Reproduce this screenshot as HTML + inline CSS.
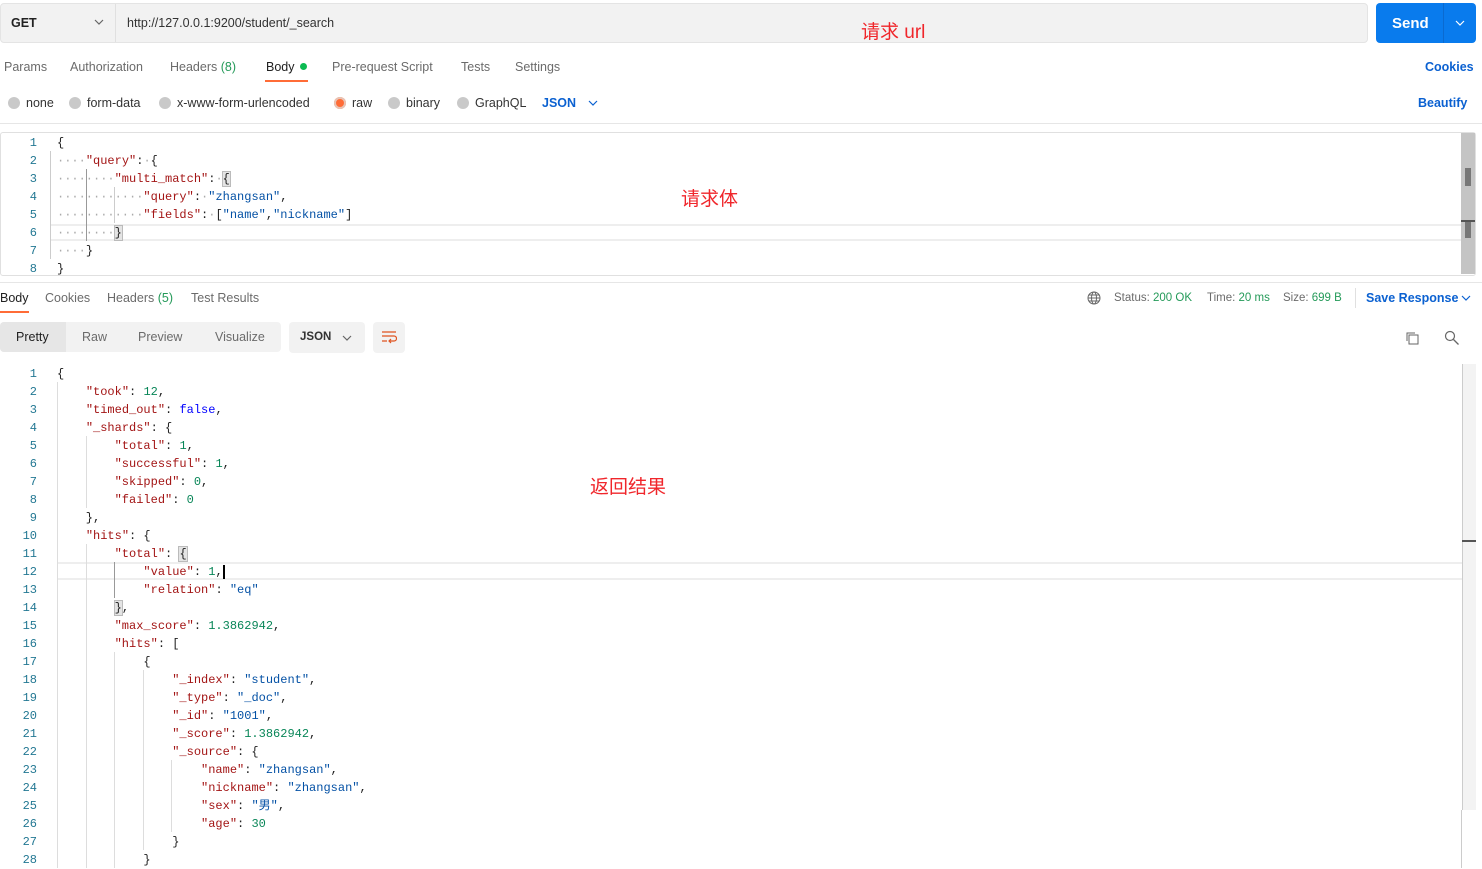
<!DOCTYPE html>
<html><head><meta charset="utf-8"><style>
*{margin:0;padding:0;box-sizing:border-box}
body{width:1482px;height:868px;overflow:hidden;background:#fff;font-family:"Liberation Sans",Arial,sans-serif;color:#212121;position:relative}
.a{position:absolute;white-space:nowrap}
.t{font-size:12.5px;color:#6b6b6b}
.m{font-family:"Liberation Mono","Noto Sans CJK SC",monospace;font-size:12px;white-space:pre;line-height:18px}
.ln{color:#237893;text-align:right;width:37px;left:0}
.k{color:#a31515}.s{color:#0451a5}.n{color:#098658}.b{color:#0000ff}.p{color:#212121}
.dot{display:inline-block;width:12px;height:12px;border-radius:50%;background:#c9c9c9;vertical-align:-2px;margin-right:6px}
.red{color:#f0262b;font-family:"Liberation Sans","Noto Sans CJK SC",sans-serif;font-size:19px}
.blue{color:#0b61d1}
.g{color:#249a59}
.w{color:#aaa}
</style></head><body>
<div class="a" style="left:0;top:3px;width:1368px;height:40px;background:#f2f2f2;border:1px solid #e4e4e4;border-radius:4px"></div>
<div class="a" style="left:115px;top:4px;width:1px;height:38px;background:#e0e0e0"></div>
<div class="a" style="left:11px;top:16px;font-size:12.5px;font-weight:bold;color:#222">GET</div>
<svg class="a" style="left:94px;top:18px" width="10" height="8"><path d="M1 2l4 4 4-4" stroke="#666" fill="none" stroke-width="1.2"/></svg>
<div class="a" style="left:127px;top:16px;font-size:12.5px;color:#333">http://127.0.0.1:9200/student/_search</div>
<div class="a red" style="left:861px;top:17px">请求 url</div>
<div class="a" style="left:1376px;top:3px;width:100px;height:40px;background:#097bed;border-radius:4px"></div>
<div class="a" style="left:1443px;top:3px;width:1px;height:40px;background:#0a6ad0"></div>
<div class="a" style="left:1392px;top:15px;font-size:15px;font-weight:bold;color:#fff">Send</div>
<svg class="a" style="left:1455px;top:19px" width="10" height="8"><path d="M1 2l4 4 4-4" stroke="#fff" fill="none" stroke-width="1.2"/></svg>
<div class="a t" style="left:4px;top:60px">Params</div>
<div class="a t" style="left:70px;top:60px">Authorization</div>
<div class="a t" style="left:170px;top:60px">Headers <span class="g">(8)</span></div>
<div class="a t" style="left:266px;top:60px;color:#212121">Body <span style="display:inline-block;width:7px;height:7px;border-radius:50%;background:#0cbb52;vertical-align:1px;margin-left:2px"></span></div>
<div class="a" style="left:265px;top:80px;width:43px;height:2px;background:#ff6c37"></div>
<div class="a t" style="left:332px;top:60px">Pre-request Script</div>
<div class="a t" style="left:461px;top:60px">Tests</div>
<div class="a t" style="left:515px;top:60px">Settings</div>
<div class="a blue" style="left:1425px;top:60px;font-size:12.5px;font-weight:bold">Cookies</div>
<div class="a t" style="left:8px;top:96px;color:#333"><span class="dot"></span>none</div>
<div class="a t" style="left:69px;top:96px;color:#333"><span class="dot"></span>form-data</div>
<div class="a t" style="left:159px;top:96px;color:#333"><span class="dot"></span>x-www-form-urlencoded</div>
<div class="a t" style="left:334px;top:96px;color:#333"><span class="dot" style="background:#ff6c37;box-shadow:0 0 0 2px #e7c4b6 inset"></span>raw</div>
<div class="a t" style="left:388px;top:96px;color:#333"><span class="dot"></span>binary</div>
<div class="a t" style="left:457px;top:96px;color:#333"><span class="dot"></span>GraphQL</div>
<div class="a blue" style="left:542px;top:96px;font-size:12.5px;font-weight:bold">JSON</div>
<svg class="a" style="left:588px;top:99px" width="10" height="8"><path d="M1 2l4 4 4-4" stroke="#0b61d1" fill="none" stroke-width="1.2"/></svg>
<div class="a blue" style="left:1418px;top:96px;font-size:12.5px;font-weight:bold">Beautify</div>
<div class="a" style="left:0;top:123px;width:1482px;height:1px;background:#e6e6e6"></div>
<div class="a" style="left:0;top:132px;width:1476px;height:144px;border:1px solid #e0e0e0;border-radius:3px"></div>
<div class="a" style="left:50px;top:224px;width:1411px;height:17px;border-top:2px solid #eee;border-bottom:2px solid #eee"></div>
<div class="a" style="left:1461px;top:133px;width:14px;height:141px;background:#c4c4c4"></div>
<div class="a" style="left:1465px;top:168px;width:6px;height:18px;background:#777"></div>
<div class="a" style="left:1461px;top:220px;width:14px;height:2px;background:#555"></div>
<div class="a" style="left:1465px;top:222px;width:6px;height:16px;background:#777"></div>
<div class="a" style="left:50px;top:151px;width:1px;height:108px;background:#ccc"></div>
<div class="a" style="left:86px;top:169px;width:1px;height:72px;background:#999"></div>
<div class="a" style="left:114px;top:187px;width:1px;height:36px;background:#ccc"></div>
<div class="a m ln" style="top:134px">1
2
3
4
5
6
7
8</div>
<div class="a m" style="left:57px;top:134px"><span class="p">{</span>
<span class="w">····</span><span class="k">"query"</span>:<span class="w">·</span>{
<span class="w">········</span><span class="k">"multi_match"</span>:<span class="w">·</span><span style="background:#e4e4e4;outline:1px solid #bbb">{</span>
<span class="w">············</span><span class="k">"query"</span>:<span class="w">·</span><span class="s">"zhangsan"</span>,
<span class="w">············</span><span class="k">"fields"</span>:<span class="w">·</span>[<span class="s">"name"</span>,<span class="s">"nickname"</span>]
<span class="w">········</span><span style="background:#e4e4e4;outline:1px solid #bbb">}</span>
<span class="w">····</span>}
}</div>
<div class="a red" style="left:681px;top:184px">请求体</div>
<div class="a" style="left:0;top:282px;width:1482px;height:1px;background:#e6e6e6"></div>
<div class="a t" style="left:0;top:291px;color:#212121">Body</div>
<div class="a" style="left:0;top:311px;width:29px;height:2px;background:#ff6c37"></div>
<div class="a t" style="left:45px;top:291px">Cookies</div>
<div class="a t" style="left:107px;top:291px">Headers <span class="g">(5)</span></div>
<div class="a t" style="left:191px;top:291px">Test Results</div>
<svg class="a" style="left:1087px;top:291px" width="14" height="14"><circle cx="7" cy="7" r="6" stroke="#666" fill="none"/><ellipse cx="7" cy="7" rx="2.5" ry="6" stroke="#666" fill="none"/><path d="M1 7h12M2 4h10M2 10h10" stroke="#666"/></svg>
<div class="a" style="left:1114px;top:292px;font-size:11.5px;color:#6b6b6b">Status: <span class="g">200 OK</span></div>
<div class="a" style="left:1207px;top:292px;font-size:11.5px;color:#6b6b6b">Time: <span class="g">20 ms</span></div>
<div class="a" style="left:1283px;top:292px;font-size:11.5px;color:#6b6b6b">Size: <span class="g">699 B</span></div>
<div class="a" style="left:1355px;top:288px;width:1px;height:20px;background:#e0e0e0"></div>
<div class="a blue" style="left:1366px;top:291px;font-size:12.5px;font-weight:bold">Save Response</div>
<svg class="a" style="left:1461px;top:294px" width="10" height="8"><path d="M1 2l4 4 4-4" stroke="#0b61d1" fill="none" stroke-width="1.2"/></svg>
<div class="a" style="left:0;top:322px;width:281px;height:30px;background:#f2f2f2;border-radius:4px"></div>
<div class="a" style="left:0;top:322px;width:66px;height:30px;background:#e6e6e6;border-radius:4px 0 0 4px"></div>
<div class="a" style="left:16px;top:330px;font-size:12.5px;color:#212121">Pretty</div>
<div class="a t" style="left:82px;top:330px">Raw</div>
<div class="a t" style="left:138px;top:330px">Preview</div>
<div class="a t" style="left:215px;top:330px">Visualize</div>
<div class="a" style="left:289px;top:322px;width:76px;height:31px;background:#f2f2f2;border-radius:4px"></div>
<div class="a" style="left:300px;top:331px;font-size:11.5px;font-weight:bold;color:#333">JSON</div>
<svg class="a" style="left:342px;top:334px" width="10" height="8"><path d="M1 2l4 4 4-4" stroke="#666" fill="none" stroke-width="1.2"/></svg>
<div class="a" style="left:373px;top:322px;width:32px;height:31px;background:#f2f2f2;border-radius:4px"></div>
<svg class="a" style="left:381px;top:330px" width="16" height="14"><path d="M1 2h14M1 6h12a2.5 2.5 0 0 1 0 5h-4M10 9l-2 2 2 2M1 11h5" stroke="#e0531f" fill="none" stroke-width="1.2"/></svg>
<svg class="a" style="left:1404px;top:330px" width="16" height="16"><rect x="5" y="5" width="9" height="9" stroke="#666" fill="none"/><path d="M3 11V3h8" stroke="#666" fill="none"/></svg>
<svg class="a" style="left:1444px;top:330px" width="16" height="16"><circle cx="6" cy="6" r="4.5" stroke="#666" fill="none" stroke-width="1.2"/><path d="M9.5 9.5l5 5" stroke="#666" stroke-width="1.3"/></svg>
<div class="a" style="left:57px;top:562px;width:1418px;height:18px;border-top:2px solid #eee;border-bottom:2px solid #eee;border-right:2px solid #eee"></div>
<div class="a" style="left:1462px;top:364px;width:14px;height:446px;background:#f3f3f3;border-left:1px solid #ccc"></div>
<div class="a" style="left:1462px;top:540px;width:14px;height:2px;background:#555"></div>
<div class="a" style="left:1461px;top:810px;width:1px;height:58px;background:#ccc"></div>
<div class="a" style="left:57px;top:382px;width:1px;height:486px;background:#ddd"></div>
<div class="a" style="left:86px;top:436px;width:1px;height:72px;background:#ddd"></div>
<div class="a" style="left:86px;top:544px;width:1px;height:324px;background:#ddd"></div>
<div class="a" style="left:114px;top:562px;width:1px;height:36px;background:#999"></div>
<div class="a" style="left:114px;top:652px;width:1px;height:216px;background:#ddd"></div>
<div class="a" style="left:143px;top:670px;width:1px;height:180px;background:#ddd"></div>
<div class="a" style="left:171px;top:760px;width:1px;height:72px;background:#ddd"></div>
<div class="a m ln" style="top:365px">1
2
3
4
5
6
7
8
9
10
11
12
13
14
15
16
17
18
19
20
21
22
23
24
25
26
27
28</div>
<div class="a m" style="left:57px;top:365px">{
    <span class="k">"took"</span>: <span class="n">12</span>,
    <span class="k">"timed_out"</span>: <span class="b">false</span>,
    <span class="k">"_shards"</span>: {
        <span class="k">"total"</span>: <span class="n">1</span>,
        <span class="k">"successful"</span>: <span class="n">1</span>,
        <span class="k">"skipped"</span>: <span class="n">0</span>,
        <span class="k">"failed"</span>: <span class="n">0</span>
    },
    <span class="k">"hits"</span>: {
        <span class="k">"total"</span>: <span style="background:#e4e4e4;outline:1px solid #bbb">{</span>
            <span class="k">"value"</span>: <span class="n">1</span>,<span style="border-left:2px solid #000"></span>
            <span class="k">"relation"</span>: <span class="s">"eq"</span>
        <span style="background:#e4e4e4;outline:1px solid #bbb">}</span>,
        <span class="k">"max_score"</span>: <span class="n">1.3862942</span>,
        <span class="k">"hits"</span>: [
            {
                <span class="k">"_index"</span>: <span class="s">"student"</span>,
                <span class="k">"_type"</span>: <span class="s">"_doc"</span>,
                <span class="k">"_id"</span>: <span class="s">"1001"</span>,
                <span class="k">"_score"</span>: <span class="n">1.3862942</span>,
                <span class="k">"_source"</span>: {
                    <span class="k">"name"</span>: <span class="s">"zhangsan"</span>,
                    <span class="k">"nickname"</span>: <span class="s">"zhangsan"</span>,
                    <span class="k">"sex"</span>: <span class="s">"男"</span>,
                    <span class="k">"age"</span>: <span class="n">30</span>
                }
            }</div>
<div class="a red" style="left:590px;top:472px">返回结果</div>
</body></html>
